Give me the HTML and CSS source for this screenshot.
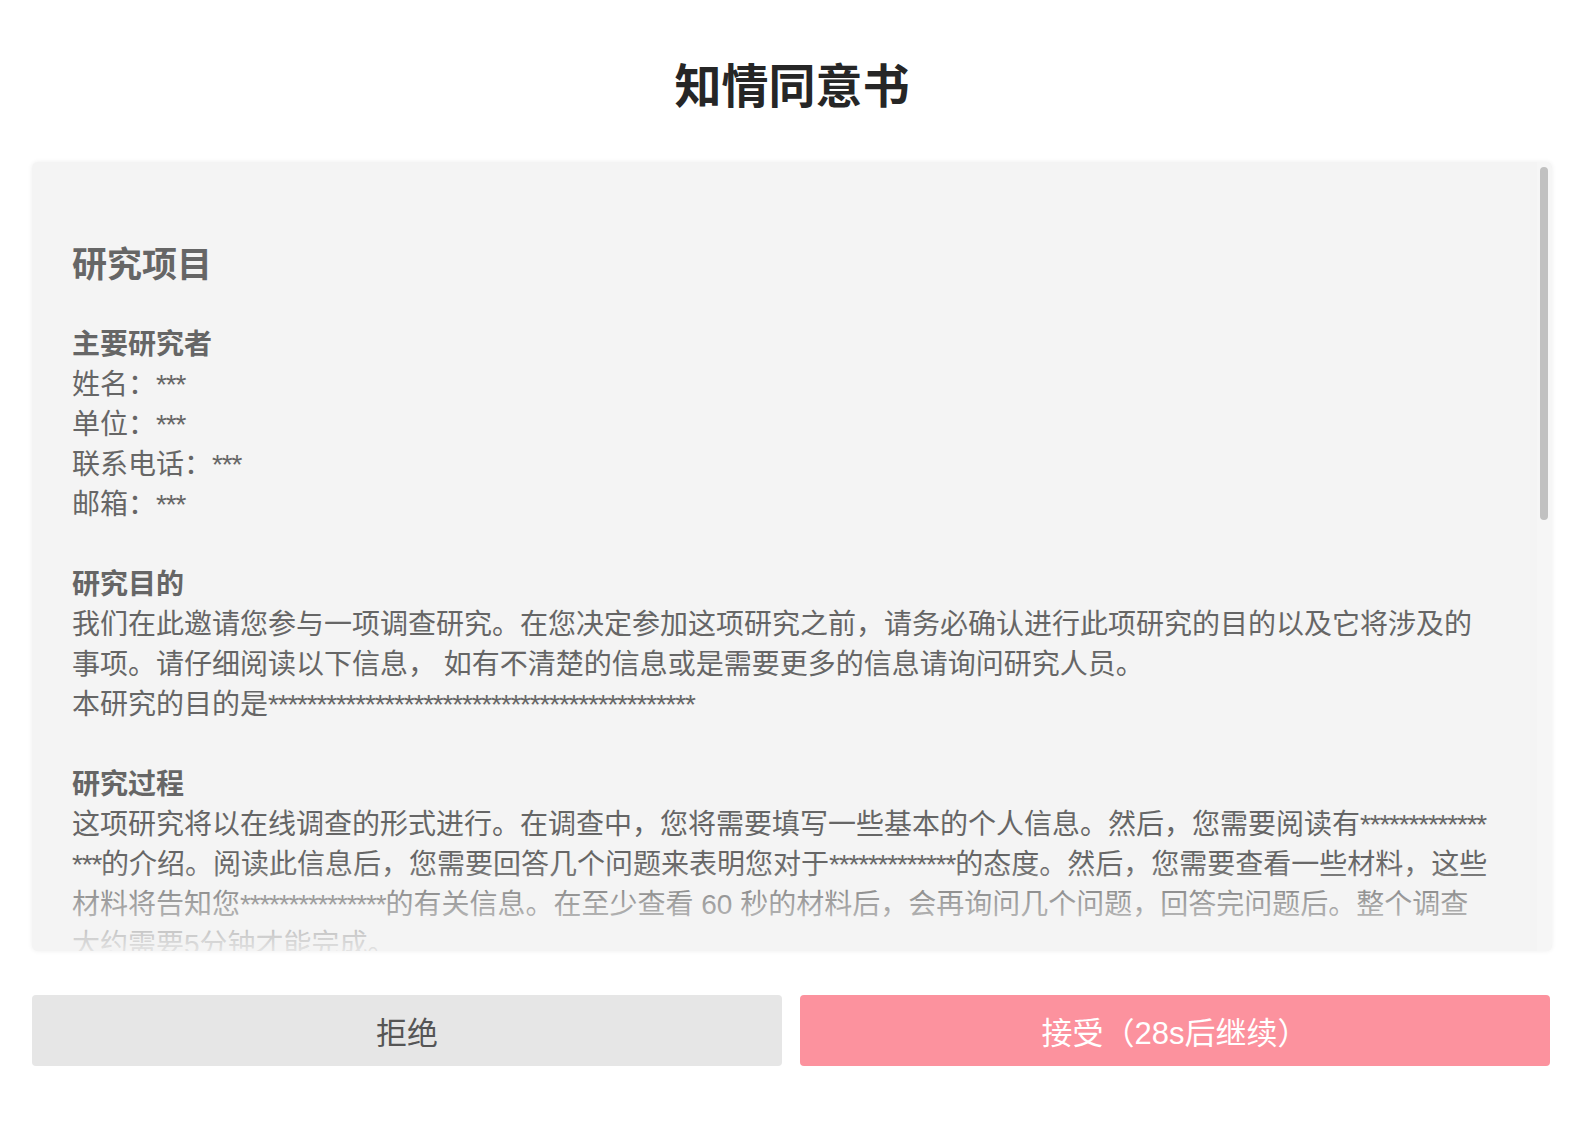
FILE: index.html
```html
<!DOCTYPE html>
<html lang="zh-CN">
<head>
<meta charset="utf-8">
<title>知情同意书</title>
<link rel="stylesheet" href="styles.css">
</head>
<body>
<main class="page">
  <h1 class="title">知情同意书</h1>
  <div class="card">
    <div class="scroller">
      <h2 class="doc-title">研究项目</h2>
      <section class="sec">
        <h3 class="sec-title">主要研究者</h3>
        <p>姓名：<span class="mask">***</span></p>
        <p>单位：<span class="mask">***</span></p>
        <p>联系电话：<span class="mask">***</span></p>
        <p>邮箱：<span class="mask">***</span></p>
      </section>
      <section class="sec">
        <h3 class="sec-title">研究目的</h3>
        <p>我们在此邀请您参与一项调查研究。在您决定参加这项研究之前，请务必确认进行此项研究的目的以及它将涉及的事项。请仔细阅读以下信息， 如有不清楚的信息或是需要更多的信息请询问研究人员。</p>
        <p>本研究的目的是<span class="mask">********************************************</span></p>
      </section>
      <section class="sec">
        <h3 class="sec-title">研究过程</h3>
        <p>这项研究将以在线调查的形式进行。在调查中，您将需要填写一些基本的个人信息。然后，您需要阅读有<span class="mask">****************</span>的介绍。阅读此信息后，您需要回答几个问题来表明您对于<span class="mask">*************</span>的态度。然后，您需要查看一些材料，这些材料将告知您<span class="mask">***************</span>的有关信息。在至少查看 60 秒的材料后，会再询问几个问题，回答完问题后。整个调查大约需要5分钟才能完成。</p>
      </section>
      <section class="sec">
        <h3 class="sec-title">可能的风险和不适</h3>
        <p>参与本研究不会对您造成任何已知的风险或不适。如果您在回答问题的过程中感到任何不适，您可以随时停止参与，不会因此受到任何不利影响。</p>
      </section>
      <section class="sec">
        <h3 class="sec-title">可能的获益</h3>
        <p>您参与本研究可能不会直接获益，但您提供的信息将帮助研究人员更好地了解相关问题。完成调查后，您将获得相应的报酬。</p>
      </section>
      <section class="sec">
        <h3 class="sec-title">保密性</h3>
        <p>您在本研究中提供的所有信息都将被严格保密。您的个人信息将不会出现在任何研究报告或出版物中。所有数据仅用于研究目的，并将被安全存储，只有研究人员才能访问。</p>
      </section>
      <section class="sec">
        <h3 class="sec-title">自愿参与和退出</h3>
        <p>您参与本研究完全出于自愿。您可以拒绝参与，也可以在研究过程中的任何时间退出，无需说明理由，也不会受到任何惩罚或失去您原本应得的任何利益。</p>
      </section>
      <section class="sec">
        <h3 class="sec-title">联系方式</h3>
        <p>如果您对本研究有任何疑问，或者想了解更多信息，请通过上述联系方式与主要研究者联系。</p>
      </section>
      <section class="sec">
        <h3 class="sec-title">同意声明</h3>
        <p>我已阅读并理解上述信息，我的问题已得到满意的答复。我自愿同意参加本研究。</p>
      </section>
    </div>
    <div class="fade"></div>
    <div class="scroll-track"><div class="scroll-thumb"></div></div>
  </div>
  <div class="actions">
    <button class="btn btn-reject" type="button">拒绝</button>
    <button class="btn btn-accept" type="button">接受（28s后继续）</button>
  </div>
</main>
</body>
</html>
```

FILE: styles.css
```css
* {
  box-sizing: border-box;
}

html, body {
  margin: 0;
  padding: 0;
  background: #ffffff;
}

body {
  font-family: "Liberation Sans", "Noto Sans CJK SC", sans-serif;
  color: #666666;
}

.page {
  padding: 0 32px;
}

.title {
  margin: 57px 0 45px;
  font-size: 47px;
  line-height: 60px;
  font-weight: 700;
  color: #262626;
  text-align: center;
}

.card {
  position: relative;
  height: 789px;
  background: #f4f4f4;
  border-radius: 6px;
  box-shadow: 0 0 5px rgba(0, 0, 0, 0.07);
  overflow: hidden;
}

.scroller {
  height: 100%;
  overflow-y: scroll;
  scrollbar-width: none;
  padding: 79px 59px 60px 40px;
  font-size: 28px;
  line-height: 40px;
  word-break: break-all;
}

.scroller::-webkit-scrollbar {
  display: none;
}

.scroll-track {
  position: absolute;
  top: 0;
  right: 0;
  bottom: 0;
  width: 15px;
  background: #f6f6f6;
}

.scroll-thumb {
  margin: 5px 4px 0 3px;
  height: 353px;
  background: #c1c1c1;
  border-radius: 4px;
}

.doc-title {
  margin: 0 0 36px;
  font-size: 35px;
  line-height: 48px;
  font-weight: 700;
}

.sec {
  margin-bottom: 40px;
}

.sec:last-child {
  margin-bottom: 0;
}

.sec-title {
  margin: 0;
  font-size: 28px;
  line-height: 40px;
  font-weight: 700;
}

.sec p {
  margin: 0;
}

.mask {
  letter-spacing: -1.2px;
}

.fade {
  position: absolute;
  left: 0;
  right: 15px;
  bottom: 0;
  height: 90px;
  background: linear-gradient(to bottom, rgba(244, 244, 244, 0), rgba(244, 244, 244, 0.88));
  pointer-events: none;
}

.actions {
  display: grid;
  grid-template-columns: 750px 750px;
  column-gap: 18px;
  margin-top: 44px;
}

.btn {
  height: 71px;
  border: 0;
  border-radius: 4px;
  font-family: "Liberation Sans", "Noto Sans CJK SC", sans-serif;
  font-size: 31px;
  cursor: pointer;
}

.btn-reject {
  background: #e6e6e6;
  color: #555555;
}

.btn-accept {
  background: #fc929e;
  color: #ffffff;
}
```
